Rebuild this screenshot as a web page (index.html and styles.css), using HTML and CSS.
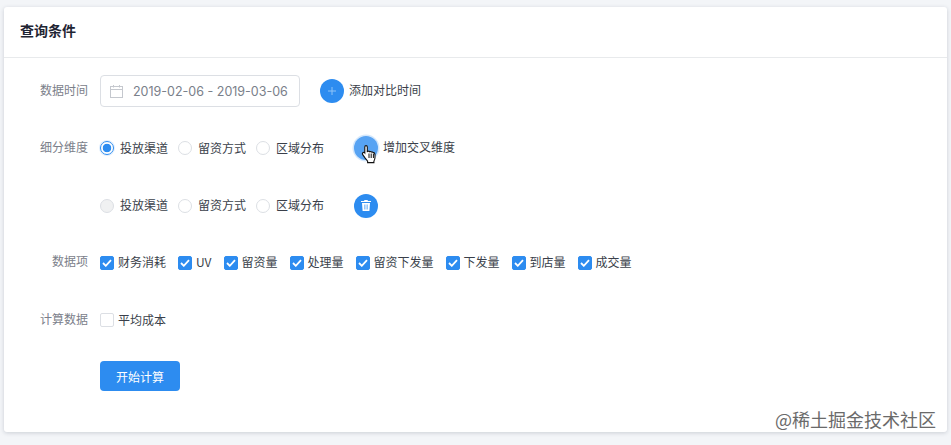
FILE: index.html
```html
<!DOCTYPE html>
<html lang="zh-CN">
<head>
<meta charset="utf-8">
<title>查询条件</title>
<link rel="stylesheet" href="styles.css">
</head>
<body>
<main class="card">
  <header class="card-head">查询条件</header>
  <section class="form">
    <div class="row">
      <div class="label">数据时间</div>
      <div class="controls">
        <div class="date-input">
          <svg class="cal" width="13" height="13" viewBox="0 0 13 13" fill="none" stroke="#c5c8ce" stroke-width="1"><rect x="0.5" y="1.5" width="12" height="11"/><path d="M0.5 4.5H12.5M3.5 0V2.5M9.5 0V2.5"/></svg>
          <span>2019-02-06 - 2019-03-06</span>
        </div>
        <div class="action first-action">
          <button class="round"><svg width="8" height="8" viewBox="0 0 8 8" stroke="#8fc3f7" stroke-width="1"><path d="M4 0V8M0 4H8"/></svg></button>
          <span>添加对比时间</span>
        </div>
      </div>
    </div>
    <div class="row">
      <div class="label">细分维度</div>
      <div class="controls">
        <div class="radios">
          <label class="radio"><i class="dot checked"></i>投放渠道</label>
          <label class="radio"><i class="dot"></i>留资方式</label>
          <label class="radio"><i class="dot"></i>区域分布</label>
        </div>
        <div class="action">
          <button class="round hover">
            <svg class="hand" width="17" height="20" viewBox="0 0 17 20"><path d="M5 1.6c.8 0 1.3.6 1.3 1.4v4.6l.7-.2c.5-.3 1.3-.1 1.6.4.5-.4 1.3-.3 1.7.3.6-.4 1.5-.2 1.8.5.5-.2 1.2 0 1.5.6.4.9.5 2.3.4 4 0 1.8-.5 3-1.1 4v1.4H6.6v-1.5c-1-1-1.7-2-2.6-3.2L1.7 10.600c-.5-.7-.4-1.500.2-1.900.6-.4 1.400-.3 1.900.3V3c0-.8.4-1.400 1.200-1.400z" fill="#fff" stroke="#111" stroke-width="1.100"/><path d="M8 9.500v4.500M10.200 9.500v4.500M12.400 9.500v4.500" stroke="#111" stroke-width="1" fill="none"/></svg>
          </button>
          <span>增加交叉维度</span>
        </div>
      </div>
    </div>
    <div class="row">
      <div class="label"></div>
      <div class="controls">
        <div class="radios">
          <label class="radio"><i class="dot disabled"></i>投放渠道</label>
          <label class="radio"><i class="dot"></i>留资方式</label>
          <label class="radio"><i class="dot"></i>区域分布</label>
        </div>
        <div class="action">
          <button class="round"><svg width="10" height="11" viewBox="0 0 10 11" fill="#fff"><path d="M3.500 0h3l.5 1H10v1H0V1h3zM1 3h8l-.6 8H1.600zM3.500 4.500v5h.8v-5zM5.700 4.500v5h.8v-5z" fill-rule="evenodd"/></svg></button>
        </div>
      </div>
    </div>
    <div class="row">
      <div class="label">数据项</div>
      <div class="checks">
        <label class="check"><i class="box on"><svg width="10" height="8" viewBox="0 0 10 8" fill="none" stroke="#fff" stroke-width="1.800"><path d="M1 4l2.800 2.800L9 1.200"/></svg></i>财务消耗</label>
        <label class="check"><i class="box on"><svg width="10" height="8" viewBox="0 0 10 8" fill="none" stroke="#fff" stroke-width="1.800"><path d="M1 4l2.800 2.800L9 1.200"/></svg></i>UV</label>
        <label class="check"><i class="box on"><svg width="10" height="8" viewBox="0 0 10 8" fill="none" stroke="#fff" stroke-width="1.800"><path d="M1 4l2.800 2.800L9 1.200"/></svg></i>留资量</label>
        <label class="check"><i class="box on"><svg width="10" height="8" viewBox="0 0 10 8" fill="none" stroke="#fff" stroke-width="1.800"><path d="M1 4l2.800 2.800L9 1.200"/></svg></i>处理量</label>
        <label class="check"><i class="box on"><svg width="10" height="8" viewBox="0 0 10 8" fill="none" stroke="#fff" stroke-width="1.800"><path d="M1 4l2.800 2.800L9 1.200"/></svg></i>留资下发量</label>
        <label class="check"><i class="box on"><svg width="10" height="8" viewBox="0 0 10 8" fill="none" stroke="#fff" stroke-width="1.800"><path d="M1 4l2.800 2.800L9 1.200"/></svg></i>下发量</label>
        <label class="check"><i class="box on"><svg width="10" height="8" viewBox="0 0 10 8" fill="none" stroke="#fff" stroke-width="1.800"><path d="M1 4l2.800 2.800L9 1.200"/></svg></i>到店量</label>
        <label class="check"><i class="box on"><svg width="10" height="8" viewBox="0 0 10 8" fill="none" stroke="#fff" stroke-width="1.800"><path d="M1 4l2.800 2.800L9 1.200"/></svg></i>成交量</label>
      </div>
    </div>
    <div class="row">
      <div class="label">计算数据</div>
      <div class="checks">
        <label class="check"><i class="box"></i>平均成本</label>
      </div>
    </div>
    <div class="row row-top">
      <div class="label"></div>
      <button class="primary">开始计算</button>
    </div>
  </section>
  <div class="watermark">@稀土掘金技术社区</div>
</main>
</body>
</html>
```

FILE: styles.css
```css
* { box-sizing: border-box; }
html, body { height: 100%; }
body {
  margin: 0;
  padding: 7px 4px 13px;
  background: #f3f5f8;
  font-family: "Noto Sans CJK SC", "Liberation Sans", sans-serif;
  font-size: 12px;
  color: #3a3f4a;
  overflow: hidden;
}
.card {
  position: relative;
  height: 425px;
  background: #fff;
  border-radius: 3px;
  box-shadow: 0 1px 4px rgba(30, 40, 60, 0.18);
}
.card-head {
  height: 51px;
  padding-left: 16px;
  padding-bottom: 4px;
  display: flex;
  align-items: center;
  border-bottom: 1px solid #e8eaec;
  font-size: 14px;
  font-weight: 700;
  color: #1f2533;
}
.form {
  padding-top: 17px;
  display: flex;
  flex-direction: column;
  gap: 25.3px;
}
.row {
  display: flex;
  align-items: center;
  min-height: 32px;
}
.row-top { align-items: flex-start; }
.label {
  width: 84px;
  margin-right: 12px;
  padding-bottom: 4px;
  text-align: right;
  color: #7b808a;
}
.controls { display: flex; align-items: center; }
.date-input {
  width: 200px;
  height: 32px;
  padding-left: 9px;
  display: flex;
  align-items: center;
  gap: 10px;
  border: 1px solid #dcdfe4;
  border-radius: 4px;
  color: #7a808a;
  font-family: "Inter", "Liberation Sans", sans-serif;
  font-size: 12.500px;
}
.cal { flex: none; }
.action { display: flex; align-items: center; gap: 5px; }
.action span { padding-bottom: 3px; }
.first-action { margin-left: 20px; }
.radios { display: flex; gap: 10px; margin-right: 30px; }
.radio { display: flex; align-items: center; gap: 6px; margin-top: -2px; }
.dot {
  width: 14px;
  height: 14px;
  margin-top: 2px;
  border: 1px solid #dcdfe4;
  border-radius: 50%;
  background: #fff;
}
.dot.checked {
  border-color: #2d8cf0;
  background: radial-gradient(circle, #2d8cf0 0 4px, #fff 4.600px);
  box-shadow: 0 0 0 1px rgba(45, 140, 240, 0.15);
}
.dot.disabled { background: #f0f1f2; }
.round {
  position: relative;
  width: 24px;
  height: 24px;
  padding: 0;
  border: 0;
  border-radius: 50%;
  background: #2d8cf0;
  display: flex;
  align-items: center;
  justify-content: center;
}
.round.hover {
  background: #57a3f3;
  box-shadow: 0 0 0 1.500px #d5e8fc;
}
.hand { position: absolute; left: 7px; top: 8px; }
.checks { display: flex; gap: 12px; }
.check { display: flex; align-items: center; gap: 4px; margin-top: -2px; }
.box {
  width: 14px;
  height: 14px;
  margin-top: 2px;
  border: 1px solid #dcdfe4;
  border-radius: 2px;
  background: #fff;
  display: flex;
  align-items: center;
  justify-content: center;
}
.box.on { background: #2d8cf0; border-color: #2d8cf0; }
.primary {
  width: 80px;
  height: 30px;
  padding: 0;
  border: 0;
  border-radius: 4px;
  background: #2d8cf0;
  color: #fff;
  font: inherit;
}
.watermark {
  position: absolute;
  right: 11px;
  bottom: 0;
  font-size: 18px;
  line-height: 26px;
  color: #6a6a6a;
}
```
